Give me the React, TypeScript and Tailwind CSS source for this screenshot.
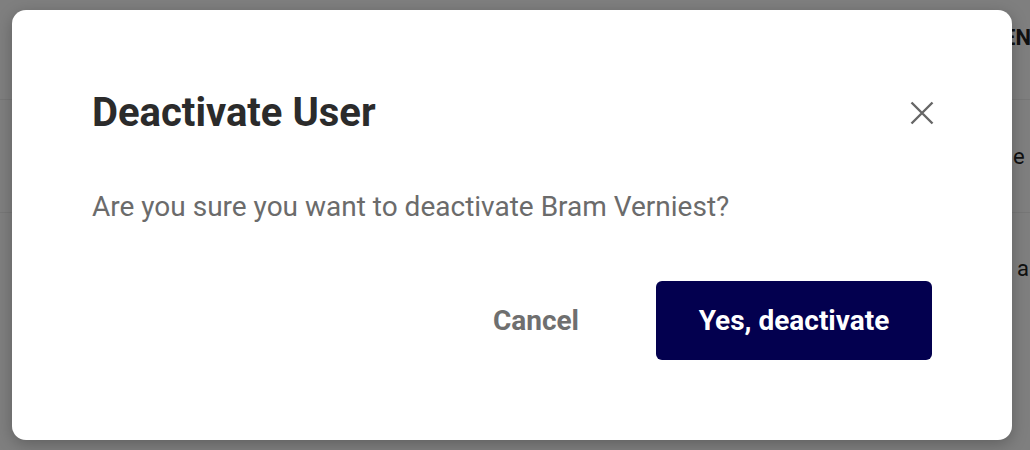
import React from "react"

function CloseIcon() {
  return (
    <svg width="24" height="24" viewBox="0 0 24 24" fill="none">
      <path d="M1.5 1.5L22.5 22.5M22.5 1.5L1.5 22.5" stroke="#666666" strokeWidth="2.4" />
    </svg>
  )
}

export default function App() {
  return (
    <div className="relative h-[450px] w-[1030px] overflow-hidden bg-white font-['Roboto',sans-serif]">
      {/* page behind the overlay */}
      <div className="grid grid-cols-[1003px_1fr] text-[#222]">
        <div className="h-[100px] border-b border-[#eee]" />
        <div className="flex h-[100px] items-start border-b border-[#eee] pt-[21px] text-[22px] font-bold whitespace-nowrap">
          ENABLED
        </div>
        <div className="h-[113px] border-b border-[#eee]" />
        <div className="flex h-[113px] items-center border-b border-[#eee] pl-[10px] text-[22px] whitespace-nowrap">
          e sales
        </div>
        <div className="h-[110px]" />
        <div className="flex h-[110px] items-center pl-[14px] text-[22px] whitespace-nowrap">
          a
        </div>
      </div>

      {/* overlay */}
      <div className="absolute inset-0 bg-black/50 pl-[12px] pt-[10px]">
        <div className="flex h-[430px] w-[1000px] flex-col rounded-[14px] bg-white px-20 pt-[79px] pb-20 shadow-[0_4px_16px_rgba(0,0,0,0.25)]">
          <div className="flex h-[48px] items-center justify-between">
            <h2 className="text-[40px] leading-[48px] font-bold text-[#2b2b2b]">Deactivate User</h2>
            <button className="-mr-[2px] flex h-[24px] w-[24px] items-center justify-center">
              <CloseIcon />
            </button>
          </div>
          <p className="mt-[52px] text-[28px] leading-[36px] text-[#6b6b6b]">
            Are you sure you want to deactivate Bram Verniest?
          </p>
          <div className="mt-auto flex items-center justify-end gap-[77px]">
            <button className="text-[28px] font-bold text-[#6f6f6f]">Cancel</button>
            <button className="h-[79px] w-[276px] rounded-[6px] bg-[#03004f] text-[28px] font-bold text-white">
              Yes, deactivate
            </button>
          </div>
        </div>
      </div>
    </div>
  )
}
